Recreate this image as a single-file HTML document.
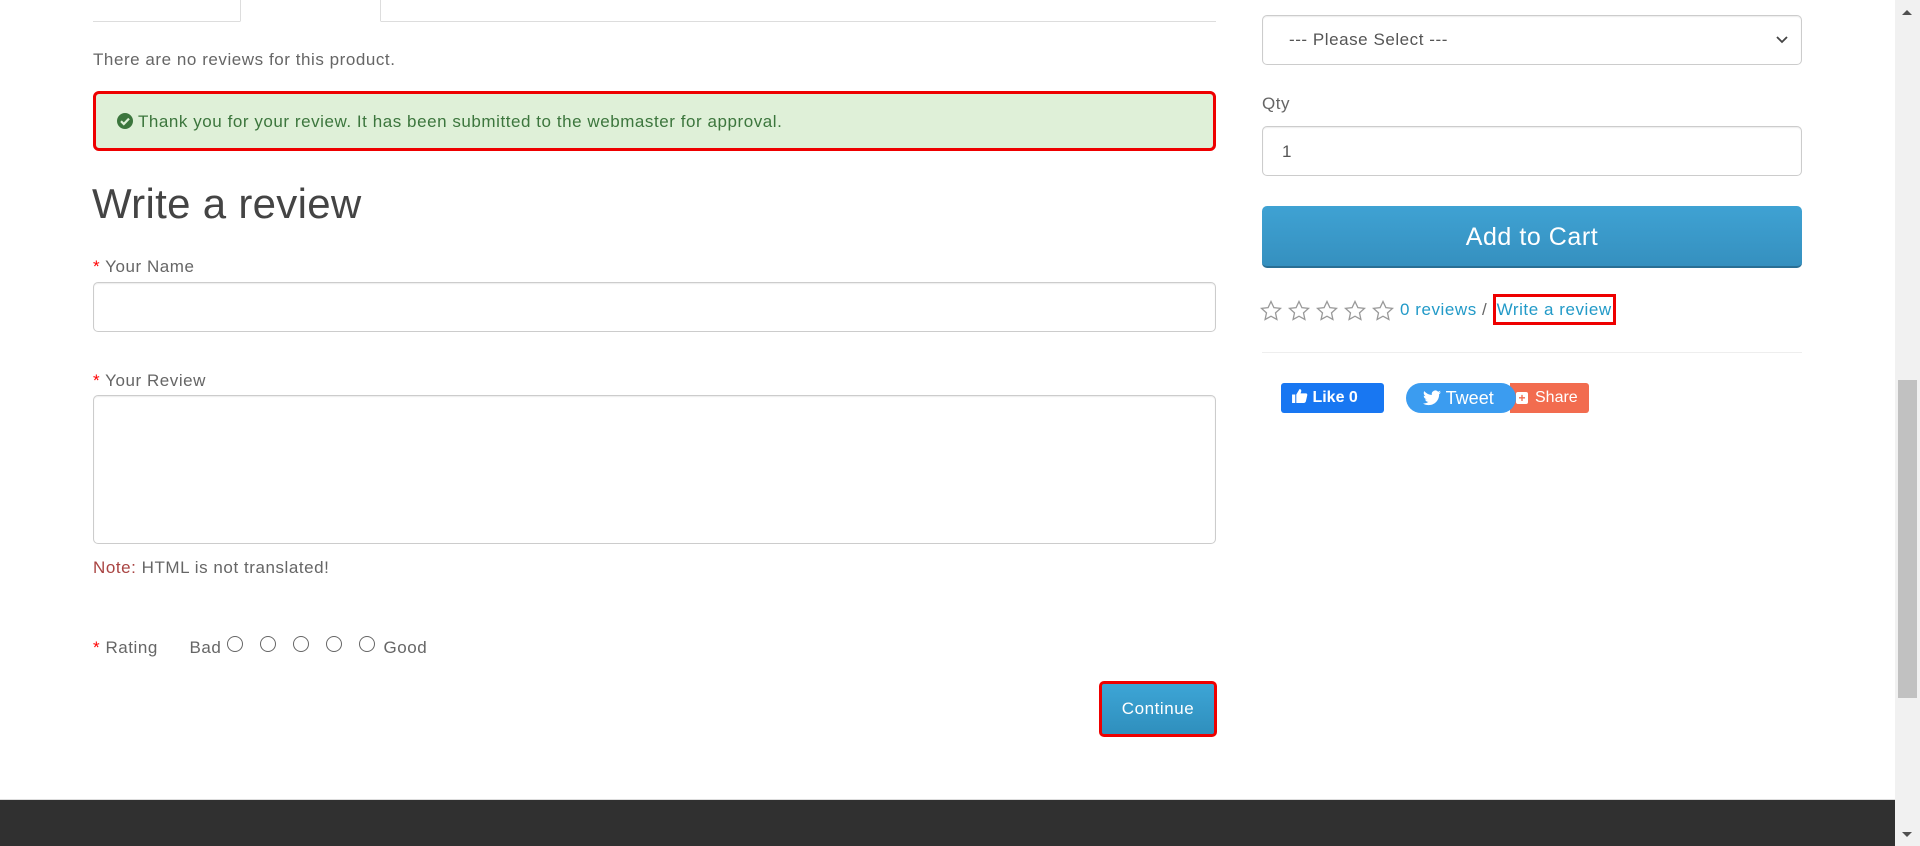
<!DOCTYPE html>
<html><head><meta charset="utf-8">
<style>
*{box-sizing:border-box}
body{margin:0;width:1920px;height:846px;overflow:hidden;background:#fff;font-family:"Liberation Sans",sans-serif;font-size:17px;color:#666;position:relative;letter-spacing:.55px}
.a{position:absolute}
.inp{position:absolute;border:1px solid #ccc;border-radius:5px;background:#fff;box-shadow:inset 0 1px 1px rgba(0,0,0,.075)}
.req{color:#f00}
.lbl{position:absolute;color:#666;font-size:17px}
a{color:#229ac8;text-decoration:none}
.star{display:inline-block;width:22px;height:22px;margin-right:6px;vertical-align:middle}
.radio{display:inline-block;width:16px;height:16px;border:1px solid #666;border-radius:50%;margin:0 8px 0 9px;vertical-align:1px}
</style></head><body>
<div class="a" style="left:93px;top:0;width:1123px;height:22px;border-bottom:1px solid #ddd"></div>
<div class="a" style="left:240px;top:-2px;width:141px;height:24px;border:1px solid #ddd;border-bottom:1px solid #fff;background:#fff"></div>
<div class="a" style="left:93px;top:50px">There are no reviews for this product.</div>
<div class="a" style="left:93px;top:91px;width:1123px;height:60px;border:3px solid #e00;border-radius:6px;background:#dff0d8;color:#3c763d;padding:18px 0 0 21px">
<svg width="16" height="16" viewBox="0 0 16 16" style="vertical-align:-2px"><circle cx="8" cy="8" r="8" fill="#3c763d"/><path d="M4 8.2l2.8 2.8L12 5.6" stroke="#dff0d8" stroke-width="2.2" fill="none"/></svg> Thank you for your review. It has been submitted to the webmaster for approval.</div>
<div class="a" style="left:92px;top:180px;font-size:42px;color:#444;letter-spacing:.3px">Write a review</div>
<div class="lbl" style="left:93px;top:257px"><span class="req">*</span> Your Name</div>
<div class="inp" style="left:93px;top:282px;width:1123px;height:50px"></div>
<div class="lbl" style="left:93px;top:371px"><span class="req">*</span> Your Review</div>
<div class="inp" style="left:93px;top:395px;width:1123px;height:149px"></div>
<div class="lbl" style="left:93px;top:558px"><span style="color:#a94442">Note:</span> HTML is not translated!</div>
<div class="lbl" style="left:93px;top:636px"><span class="req">*</span> Rating &nbsp;&nbsp;&nbsp;&nbsp; Bad<span class="radio" style="margin-left:6px"></span><span class="radio"></span><span class="radio"></span><span class="radio"></span><span class="radio"></span>Good</div>
<div class="a" style="left:1099px;top:681px;width:118px;height:56px;border:3px solid #e00;border-radius:5px;background:linear-gradient(#3da5d6,#2f8fbd);color:#fff;text-align:center;line-height:50px;font-size:17px">Continue</div>
<div class="inp" style="left:1262px;top:15px;width:540px;height:50px;padding:14px 0 0 26px;color:#555">--- Please Select ---<svg class="a" style="right:12px;top:19px" width="14" height="10" viewBox="0 0 14 10"><path d="M2 2l5 5 5-5" stroke="#444" stroke-width="1.8" fill="none"/></svg></div>
<div class="lbl" style="left:1262px;top:94px">Qty</div>
<div class="inp" style="left:1262px;top:126px;width:540px;height:50px;padding:15px 0 0 19px;color:#555">1</div>
<div class="a" style="left:1262px;top:206px;width:540px;height:62px;border-radius:5px;background:linear-gradient(#3fa2d3,#3590bf);border-bottom:2px solid #2a6f94;color:#fff;text-align:center;line-height:62px;font-size:25px">Add to Cart</div>
<div class="a" style="left:1260px;top:294px;height:28px;line-height:28px;white-space:nowrap">
<svg width="0" height="0" style="position:absolute"><defs><path id="s" d="M11 1.5l2.9 6.2 6.6.7-5 4.5 1.4 6.6L11 16.2 5.1 19.5l1.4-6.6-5-4.5 6.6-.7z" fill="none" stroke="#999" stroke-width="1.3"/></defs></svg>
<svg class="star" viewBox="0 0 22 22"><use href="#s"/></svg><svg class="star" viewBox="0 0 22 22"><use href="#s"/></svg><svg class="star" viewBox="0 0 22 22"><use href="#s"/></svg><svg class="star" viewBox="0 0 22 22"><use href="#s"/></svg><svg class="star" viewBox="0 0 22 22"><use href="#s"/></svg><a>0 reviews</a> / <a style="display:inline-block;border:3px solid #e00;padding:0 1px;line-height:25px">Write a review</a></div>
<div class="a" style="left:1262px;top:352px;width:540px;border-top:1px solid #eee"></div>
<div class="a" style="left:1281px;top:383px;width:103px;height:30px;background:#1877f2;border-radius:3px;color:#fff;font-weight:bold;font-size:16px;line-height:30px;padding-left:10px;letter-spacing:0">
<svg width="17" height="17" viewBox="0 0 16 16" style="vertical-align:-2px"><path d="M1 7h3v8H1zM5 7l3-5c1 0 2 .6 1.6 2.2L9 6h5c1 0 1.6 1 1.3 1.8L14 13.5c-.3.9-1 1.5-2 1.5H5z" fill="#fff"/></svg> Like 0</div>
<div class="a" style="left:1510px;top:383px;width:79px;height:30px;background:#f26c4f;border-radius:0 3px 3px 0;color:#fff;font-size:16px;line-height:30px;padding-left:25px;letter-spacing:0">Share</div>
<div class="a" style="left:1516px;top:392px;width:12px;height:12px;background:#fff;border-radius:2px;color:#f26c4f;font-size:12px;line-height:12px;text-align:center;font-weight:bold;letter-spacing:0">+</div>
<div class="a" style="left:1406px;top:383px;width:110px;height:30px;background:#3b9cf0;border-radius:15px;color:#fff;font-size:18px;line-height:30px;padding-left:17px;letter-spacing:0">
<svg width="18" height="16" viewBox="0 0 24 20" style="vertical-align:-2px"><path d="M24 2.4a10 10 0 0 1-2.8.8A5 5 0 0 0 23.3.4a10 10 0 0 1-3.1 1.2A4.9 4.9 0 0 0 11.8 6 14 14 0 0 1 1.7.9a4.9 4.9 0 0 0 1.5 6.6A4.9 4.9 0 0 1 1 6.9a4.9 4.9 0 0 0 3.9 4.8 5 5 0 0 1-2.2.1 4.9 4.9 0 0 0 4.6 3.4A9.9 9.9 0 0 1 0 17.3 14 14 0 0 0 7.5 19.5c9 0 14-7.5 14-14v-.6A10 10 0 0 0 24 2.4z" fill="#fff"/></svg> Tweet</div>
<div class="a" style="left:0;top:799px;width:1895px;height:47px;background:#303030;border-top:1px solid #ddd"></div>
<div class="a" style="left:1895px;top:0;width:25px;height:846px;background:#f1f1f1"></div>
<div class="a" style="left:1898px;top:380px;width:19px;height:318px;background:#c1c1c1"></div>
<div class="a" style="left:1902px;top:10px;width:0;height:0;border-left:5px solid transparent;border-right:5px solid transparent;border-bottom:5px solid #505050"></div>
<div class="a" style="left:1902px;top:832px;width:0;height:0;border-left:5px solid transparent;border-right:5px solid transparent;border-top:5px solid #505050"></div>
</body></html>
